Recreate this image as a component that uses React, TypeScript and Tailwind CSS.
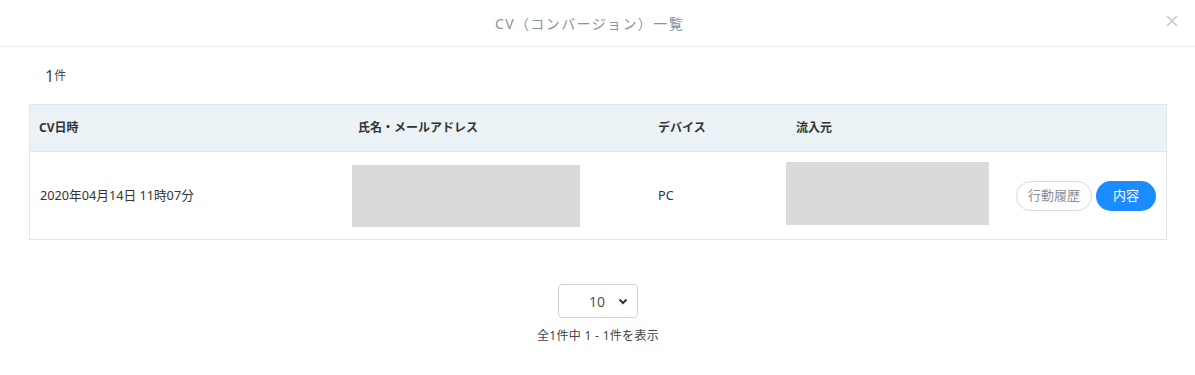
import React from "react";

export default function App() {
  return (
    <div
      className="w-[1195px] h-[375px] bg-white text-[#333] overflow-hidden"
      style={{ fontFamily: '"Noto Sans", "Noto Sans CJK JP", sans-serif' }}
    >
      <div className="relative h-[47px] border-b border-[#e9ebee] flex items-center justify-center">
        <span className="text-[14px] text-[#8a93a0] tracking-[1.4px] pr-[16px]">CV（コンバージョン）一覧</span>
        <svg className="absolute right-[17px] top-[15px]" width="12" height="12" viewBox="0 0 12 12">
          <path d="M1 1L11 11M11 1L1 11" stroke="#c8c8c8" strokeWidth="1.6" />
        </svg>
      </div>
      <div className="px-[29px] pr-[28px]">
        <div className="h-[57px] flex items-center pl-[16px] pt-[1px]">
          <span className="text-[16px] text-[#444] leading-none">1</span>
          <span className="text-[12px] text-[#444] leading-none">件</span>
        </div>
        <div className="border border-[#e3e6e8]">
          <div className="h-[47px] bg-[#ebf3f6] flex items-center text-[12px] font-bold text-[#333] border-b border-[#e3e6e8]">
            <div className="w-[318px] pl-[9px]">CV日時</div>
            <div className="w-[300px] pl-[10px]">氏名・メールアドレス</div>
            <div className="w-[138px] pl-[10px]">デバイス</div>
            <div className="pl-[10px]">流入元</div>
          </div>
          <div className="h-[87px] flex items-center text-[12.7px] text-[#333]">
            <div className="w-[318px] pl-[10px]">2020年04月14日 11時07分</div>
            <div className="w-[300px] pl-[4px] pt-[1px]">
              <div className="w-[228px] h-[62px] bg-[#dadada]" />
            </div>
            <div className="w-[138px] pl-[10px]">PC</div>
            <div className="pb-[5px]">
              <div className="w-[203px] h-[63px] bg-[#dadada]" />
            </div>
            <div className="flex-1 flex justify-end items-center gap-[4px] pr-[10px] pt-[1px]">
              <button className="h-[30px] w-[76px] rounded-full border border-[#d5d9e0] text-[13px] text-[#8a8f99] bg-white">
                行動履歴
              </button>
              <button className="h-[30px] w-[60px] rounded-full bg-[#1a8cff] text-[13px] text-white">
                内容
              </button>
            </div>
          </div>
        </div>
        <div className="flex flex-col items-center mt-[44px]">
          <div className="w-[80px] h-[34px] border border-[#cfd3d8] rounded-[4px] flex items-center justify-between pl-[30px] pr-[9px]">
            <span className="text-[14px] text-[#555]">10</span>
            <svg width="10" height="7" viewBox="0 0 10 7">
              <path d="M1.5 1.5L5 5L8.5 1.5" stroke="#333" strokeWidth="2" fill="none" />
            </svg>
          </div>
          <div className="mt-[9px] text-[12px] text-[#444] tracking-[0.3px]">全1件中 1 - 1件を表示</div>
        </div>
      </div>
    </div>
  );
}
